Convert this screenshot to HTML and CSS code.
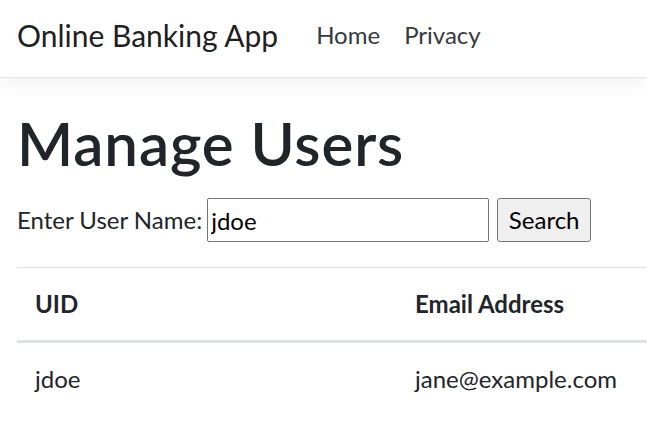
FILE: index.html
```html
<!DOCTYPE html>
<html lang="en">
<head>
  <meta charset="UTF-8">
  <meta name="viewport" content="width=device-width, initial-scale=1">
  <title>Manage Users - Online Banking App</title>
  <link rel="stylesheet" href="styles.css">
</head>
<body>

  <header class="navbar">
    <a class="navbar-brand" href="#">Online Banking App</a>
    <ul class="navbar-nav">
      <li><a class="nav-link" href="#">Home</a></li>
      <li><a class="nav-link" href="#">Privacy</a></li>
    </ul>
  </header>

  <main class="container">
    <h1>Manage Users</h1>

    <form class="search-form">
      <label for="username">Enter User Name:</label>
      <input type="text" id="username" name="username" value="jdoe">
      <button type="submit">Search</button>
    </form>

    <table class="table">
      <thead>
        <tr>
          <th class="col-uid">UID</th>
          <th>Email Address</th>
        </tr>
      </thead>
      <tbody>
        <tr>
          <td>jdoe</td>
          <td>jane@example.com</td>
        </tr>
      </tbody>
    </table>
  </main>

</body>
</html>
```

FILE: styles.css
```css
* {
  box-sizing: border-box;
}

body {
  font-family: Lato, "Liberation Sans", sans-serif;
  font-size: 24px;
  line-height: 1.5;
  color: #212529;
  background: #fff;
  margin: 0;
  overflow: hidden;
}

a {
  text-decoration: none;
}

/* Barre de navigation */
.navbar {
  display: flex;
  align-items: center;
  height: 78px;
  padding: 0 0 7px 17px;
  background: #fff;
  border-bottom: 1px solid #e5e5e5;
  box-shadow: 0 6px 18px rgba(0, 0, 0, 0.05);
}

.navbar-brand {
  font-size: 30px;
  color: rgba(0, 0, 0, 0.9);
  margin-right: 38px;
}

.navbar-nav {
  display: flex;
  gap: 24px;
  list-style: none;
  margin: 0;
  padding: 0;
}

.nav-link {
  color: #343a40;
}

/* Contenu */
.container {
  padding-left: 17px;
}

h1 {
  font-size: 60px;
  font-weight: 600;
  line-height: 1.2;
  letter-spacing: 0.9px;
  margin: 29px 0 19px;
}

.search-form {
  display: flex;
  align-items: center;
  gap: 8px;
  margin-bottom: 25px;
}

.search-form label {
  margin-right: -3px;
}

.search-form input {
  width: 282px;
  height: 44px;
  font: inherit;
  color: #000;
  padding: 0 3px;
  border: 1px solid #767676;
  border-radius: 2px;
}

.search-form button {
  width: 94px;
  height: 44px;
  font: inherit;
  color: #000;
  padding: 0;
  background: #efefef;
  border: 1px solid #767676;
  border-radius: 3px;
}

.table {
  width: 100%;
  table-layout: fixed;
  border-collapse: collapse;
}

.table th,
.table td {
  text-align: left;
  padding: 18px;
  border-top: 1px solid #dee2e6;
}

.table th {
  font-weight: 700;
  border-bottom: 3px solid #dee2e6;
}

.table .col-uid {
  width: 380px;
}
```
